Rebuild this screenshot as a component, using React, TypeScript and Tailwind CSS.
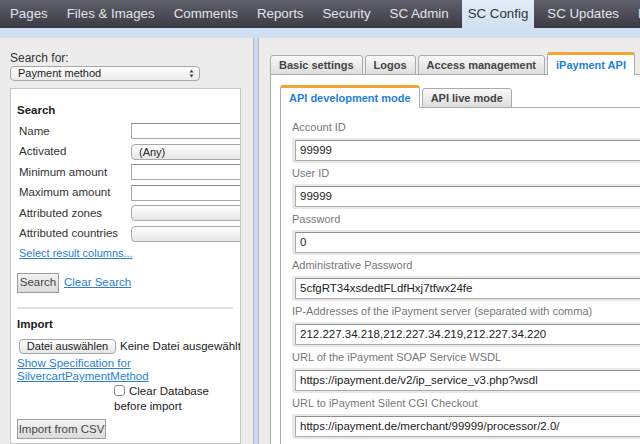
import React from "react";

const menu = [
  "Pages",
  "Files & Images",
  "Comments",
  "Reports",
  "Security",
  "SC Admin",
  "SC Config",
  "SC Updates",
  "Help",
];

const fields = [
  { label: "Account ID", value: "99999" },
  { label: "User ID", value: "99999" },
  { label: "Password", value: "0" },
  { label: "Administrative Password", value: "5cfgRT34xsdedtFLdfHxj7tfwx24fe" },
  {
    label: "IP-Addresses of the iPayment server (separated with comma)",
    value: "212.227.34.218,212.227.34.219,212.227.34.220",
  },
  {
    label: "URL of the iPayment SOAP Service WSDL",
    value: "https://ipayment.de/v2/ip_service_v3.php?wsdl",
  },
  {
    label: "URL to iPayment Silent CGI Checkout",
    value: "https://ipayment.de/merchant/99999/processor/2.0/",
  },
];

function TextInput() {
  return (
    <div className="h-[16px] w-[140px] shrink-0 border border-[#a8a8a8] border-t-[#8a8a8a] bg-white" />
  );
}

function SelectBox({ text }: { text?: string }) {
  return (
    <div className="h-[16px] w-[140px] shrink-0 rounded-[4px] border border-[#a8a8a8] bg-gradient-to-b from-white to-[#e6e6e6] pl-[7px] text-[11px] leading-[14px] text-[#222]">
      {text}
    </div>
  );
}

function SearchRow({ label, children }: { label: string; children: React.ReactNode }) {
  return (
    <div className="flex h-[20.5px] items-center">
      <div className="w-[114px] shrink-0 pl-[2px] text-[11.5px] text-[#333]">{label}</div>
      {children}
    </div>
  );
}

function Tab({ label, active }: { label: string; active?: boolean }) {
  return active ? (
    <div className="flex h-[23px] items-center rounded-t-[3px] border-x border-t-[3px] border-[#ababab] border-t-[#f2a531] bg-white px-[8px] text-[11px] font-bold text-[#1f7fd6] whitespace-nowrap">
      {label}
    </div>
  ) : (
    <div className="flex h-[20px] items-center rounded-t-[3px] border border-[#ababab] bg-gradient-to-b from-[#f9f9f9] to-[#dddddd] px-[8px] text-[11px] font-bold text-[#444] whitespace-nowrap">
      {label}
    </div>
  );
}

export default function App() {
  return (
    <div className="flex h-[444px] w-[640px] flex-col overflow-hidden bg-[#ececec] font-['Liberation_Sans',Arial,sans-serif]">
      {/* top menu */}
      <nav className="flex h-[28px] shrink-0 gap-[7px] bg-gradient-to-b from-[#60606a] to-[#3b3b45] pl-[4px] text-[13.3px] whitespace-nowrap">
        {menu.map((item) =>
          item === "SC Config" ? (
            <div
              key={item}
              className="flex items-center bg-gradient-to-b from-[#e2ecf7] to-[#d0e0f2] px-[6px] text-[#333]"
            >
              {item}
            </div>
          ) : (
            <div key={item} className="flex items-center px-[6px] text-[#e4e4e6]">
              {item}
            </div>
          )
        )}
      </nav>
      <div className="h-[10px] shrink-0 bg-[#d0e0f2]" />

      <div className="flex min-h-0 flex-1">
        {/* left panel */}
        <div className="flex w-[254px] shrink-0 flex-col border-r border-[#b9b9b9] bg-[#ececec] pl-[10px] pt-[13px]">
          <div className="text-[12px] leading-[14px] text-[#333]">Search for:</div>
          <div className="mt-[1px] flex h-[15px] w-[190px] items-center justify-between rounded-[4px] border border-[#a8a8a8] bg-gradient-to-b from-white to-[#ebebeb] pl-[7px] pr-[5px] text-[11px] text-[#222]">
            <span>Payment method</span>
            <svg width="5" height="9" viewBox="0 0 5 9">
              <path d="M2.5 0.5 L4.5 3.5 L0.5 3.5 Z M2.5 8.5 L4.5 5.5 L0.5 5.5 Z" fill="#444" />
            </svg>
          </div>

          <div className="mt-[7px] flex w-[231px] flex-1 flex-col overflow-hidden border border-[#c6c6c6] bg-white pl-[6px] pt-[14px] whitespace-nowrap">
            <div className="text-[11.5px] font-bold leading-[14px] text-[#222]">Search</div>
            <div className="mt-[4px] flex flex-col">
              <SearchRow label="Name">
                <TextInput />
              </SearchRow>
              <SearchRow label="Activated">
                <SelectBox text="(Any)" />
              </SearchRow>
              <SearchRow label="Minimum amount">
                <TextInput />
              </SearchRow>
              <SearchRow label="Maximum amount">
                <TextInput />
              </SearchRow>
              <SearchRow label="Attributed zones">
                <SelectBox />
              </SearchRow>
              <SearchRow label="Attributed countries">
                <SelectBox />
              </SearchRow>
            </div>
            <a className="mt-[2px] pl-[2px] text-[11px] leading-[14px] text-[#2a80d6] underline">
              Select result columns...
            </a>

            <div className="mt-[13px] flex items-center">
              <div className="flex h-[20px] w-[42px] items-center justify-center border border-[#9c9c9c] bg-gradient-to-b from-[#f2f2f2] to-[#dcdcdc] text-[11.5px] text-[#444]">
                Search
              </div>
              <a className="ml-[5px] text-[11.5px] text-[#2a80d6] underline">Clear Search</a>
            </div>

            <div className="mt-[14px] h-[2px] w-[216px] bg-[#e2e2e2]" />

            <div className="mt-[8px] text-[11.5px] font-bold leading-[14px] text-[#222]">Import</div>
            <div className="mt-[7px] flex items-center">
              <div className="ml-[2px] flex h-[15px] w-[97px] shrink-0 items-center justify-center rounded-[4px] border border-[#a6a6a6] bg-gradient-to-b from-white to-[#e6e6e6] text-[11px] text-[#222]">
                Datei auswählen
              </div>
              <span className="ml-[4px] text-[11.5px] text-[#222]">Keine Datei ausgewählt</span>
            </div>
            <a className="mt-[2px] text-[11.5px] leading-[13px] text-[#2a80d6] underline">
              Show Specification for
              <br />
              SilvercartPaymentMethod
            </a>
            <div className="ml-[97px] mt-[1px] w-[120px] whitespace-normal text-[11.5px] leading-[15px] text-[#222]">
              <span className="mr-[4px] inline-block h-[11px] w-[11px] rounded-[3px] border border-[#8c8c8c] bg-white align-[-1px]" />
              Clear Database before import
            </div>
            <div className="mt-[5px] flex h-[20px] w-[89px] items-center justify-center border border-[#9c9c9c] bg-gradient-to-b from-[#f2f2f2] to-[#dcdcdc] text-[11.5px] text-[#444]">
              Import from CSV
            </div>
          </div>
        </div>

        {/* splitter */}
        <div className="w-[4px] shrink-0 bg-[#c8dbf0]" />

        {/* right panel */}
        <div className="flex min-w-0 flex-1 flex-col border-l border-[#b9b9b9] bg-[#ececec] pl-[11px] pt-[14px]">
          <div className="relative z-10 -mb-px flex items-end gap-[2px]">
            <Tab label="Basic settings" />
            <Tab label="Logos" />
            <Tab label="Access management" />
            <Tab label="iPayment API" active />
          </div>
          <div className="flex flex-1 flex-col border-l border-t border-[#ababab] bg-white pl-[9px] pt-[10px]">
            <div className="relative z-10 -mb-px flex items-end gap-[2px]">
              <Tab label="API development mode" active />
              <Tab label="API live mode" />
            </div>
            <div className="flex flex-1 flex-col border-l border-t border-[#ababab] bg-white pl-[11px] pt-[9px]">
              {fields.map((f) => (
                <div key={f.label} className="flex flex-col">
                  <div className="flex h-[21px] items-center text-[11px] whitespace-nowrap text-[#777]">
                    {f.label}
                  </div>
                  <div className="flex h-[25px] w-[400px] shrink-0 items-center rounded-l-[2px] bg-[#e8e8e8] pl-[3px]">
                    <div className="flex h-[21px] flex-1 items-center border border-[#ababab] border-t-[#8e8e8e] bg-white pl-[4px] text-[11.5px] whitespace-nowrap text-[#222]">
                      {f.value}
                    </div>
                  </div>
                </div>
              ))}
            </div>
          </div>
        </div>
      </div>
    </div>
  );
}
